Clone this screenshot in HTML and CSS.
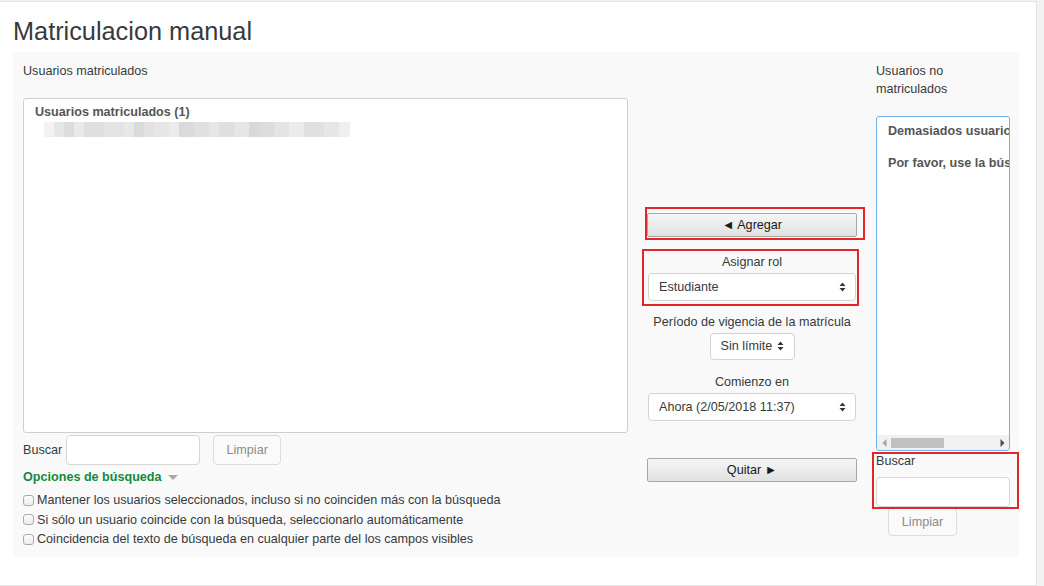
FILE: index.html
```html
<!DOCTYPE html>
<html lang="es">
<head>
<meta charset="utf-8">
<title>Matriculacion manual</title>
<link rel="stylesheet" href="styles.css">
</head>
<body>
<div class="card">
  <h2 class="title">Matriculacion manual</h2>
  <div class="panel">
    <div class="col-left">
      <div class="col-label">Usuarios matriculados</div>
      <div class="listbox">
        <div class="group-label">Usuarios matriculados (1)</div>
        <div class="blurred"></div>
      </div>
      <div class="search-row">
        <span class="search-label">Buscar</span>
        <span class="input input-left"></span>
        <span class="btn-clear btn-clear-left">Limpiar</span>
      </div>
      <div class="options-toggle">Opciones de búsqueda <span class="caret"></span></div>
      <div class="check-row"><span class="checkbox"></span>Mantener los usuarios seleccionados, incluso si no coinciden más con la búsqueda</div>
      <div class="check-row"><span class="checkbox"></span>Si sólo un usuario coincide con la búsqueda, seleccionarlo automáticamente</div>
      <div class="check-row"><span class="checkbox"></span>Coincidencia del texto de búsqueda en cualquier parte del los campos visibles</div>
    </div>

    <div class="col-mid">
      <div class="mark mark-add">
        <div class="btn-move">◄ Agregar</div>
      </div>
      <div class="mark mark-role">
        <div class="field-label first">Asignar rol</div>
        <div class="select select-wide">
          <span>Estudiante</span>
          <svg class="arrows" width="7" height="10" viewBox="0 0 7 10"><path d="M3.5 0.5 L6.5 4 L0.5 4 Z M0.5 6 L6.5 6 L3.5 9.5 Z" fill="#333"/></svg>
        </div>
      </div>
      <div class="field-label">Período de vigencia de la matrícula</div>
      <div class="select select-small">
        <span>Sin límite</span>
        <svg class="arrows" width="7" height="10" viewBox="0 0 7 10"><path d="M3.5 0.5 L6.5 4 L0.5 4 Z M0.5 6 L6.5 6 L3.5 9.5 Z" fill="#333"/></svg>
      </div>
      <div class="field-label">Comienzo en</div>
      <div class="select select-wide">
        <span>Ahora (2/05/2018 11:37)</span>
        <svg class="arrows" width="7" height="10" viewBox="0 0 7 10"><path d="M3.5 0.5 L6.5 4 L0.5 4 Z M0.5 6 L6.5 6 L3.5 9.5 Z" fill="#333"/></svg>
      </div>
      <div class="btn-move btn-remove">Quitar ►</div>
    </div>

    <div class="col-right">
      <div class="col-label">Usuarios no<br>matriculados</div>
      <div class="listbox listbox-right">
        <div class="list-inner">
          <div class="group-label">Demasiados usuarios (más de 100)</div>
          <div class="group-label second">Por favor, use la búsqueda.</div>
        </div>
        <div class="hscroll">
          <svg class="sarrow" width="5" height="8" viewBox="0 0 5 8"><path d="M4.5 0 L0.5 4 L4.5 8 Z" fill="#a3a3a3"/></svg>
          <span class="thumb"></span>
          <svg class="sarrow right" width="5" height="8" viewBox="0 0 5 8"><path d="M0.5 0 L4.5 4 L0.5 8 Z" fill="#505050"/></svg>
        </div>
      </div>
      <div class="mark mark-search">
        <div class="search-label-right">Buscar</div>
        <div class="input input-right"></div>
      </div>
      <span class="btn-clear btn-clear-right">Limpiar</span>
    </div>
  </div>
</div>
</body>
</html>
```
FILE: styles.css
```css
* { box-sizing: border-box; }
html, body {
  margin: 0;
  padding: 0;
}
body {
  background: #f2f2f2;
  font-family: "Liberation Sans", Arial, sans-serif;
  font-size: 12.6px;
  color: #373a3c;
  padding-top: 1px;
}
.card {
  width: 1037px;
  height: 585px;
  background: #fff;
  border: 1px solid #e3e3e3;
  border-left: none;
  padding-left: 13px;
}
.title {
  margin: 14px 0 6px 0;
  font-size: 25.3px;
  font-weight: normal;
  line-height: 30px;
  color: #373a3c;
}
.panel {
  width: 1006px;
  height: 505px;
  background: #f9f9f9;
  padding: 10px 0 0 10px;
  display: flex;
  align-items: flex-start;
}
.col-label {
  line-height: 18px;
  margin-bottom: 18px;
}
.col-left { width: 605px; }
.listbox {
  height: 335px;
  background: #fff;
  border: 1px solid #cfcfcf;
  border-radius: 3px;
}
.group-label {
  font-weight: bold;
  color: #555;
  line-height: 18px;
  padding: 4px 0 0 11px;
  white-space: nowrap;
}
.blurred {
  margin: 1px 0 0 20px;
  width: 306px;
  height: 15px;
  background: linear-gradient(to right,
    #f2f2f2 0 10px, #e6e6e6 10px 20px, #dcdcdc 20px 30px, #e9e9ea 30px 40px,
    #dedede 40px 60px, #e3e3e3 60px 80px, #e8e8e8 80px 90px, #d8dbde 90px 100px,
    #e2e2e2 100px 110px, #e6e6e6 110px 125px, #ebebeb 125px 135px, #dadada 135px 150px,
    #e0e0e0 150px 165px, #e6e6e6 165px 175px, #dde0e3 175px 190px, #e6e6e6 190px 205px,
    #d8d8d8 205px 215px, #dcdcdc 215px 230px, #e3e3e3 230px 245px, #ebebeb 245px 260px,
    #e0e0e0 260px 280px, #e6e6e6 280px 295px, #eeeff0 295px 306px);
}
.search-row {
  display: flex;
  align-items: center;
  margin-top: 2px;
  height: 30px;
}
.search-label { line-height: 18px; margin-right: 4px; padding-top: 0; }
.input {
  display: block;
  height: 30px;
  background: #fff;
  border: 1px solid #d6d6d6;
  border-radius: 4px;
}
.input-left { width: 134px; }
.btn-clear {
  display: flex;
  align-items: center;
  justify-content: center;
  width: 68px;
  height: 30px;
  border: 1px solid #dcdcdc;
  border-radius: 4px;
  color: #8a8a8a;
  background: #fafafa;
}
.btn-clear-left { margin-left: 13px; }
.options-toggle {
  margin-top: 3px;
  line-height: 18px;
  font-weight: bold;
  color: #138a3c;
  display: flex;
  align-items: center;
}
.caret {
  display: inline-block;
  margin-left: 6px;
  margin-top: 1px;
  width: 0;
  height: 0;
  border-left: 5px solid transparent;
  border-right: 5px solid transparent;
  border-top: 5px solid #a8a8a8;
}
.options-toggle + .check-row { margin-top: 5px; }
.check-row {
  line-height: 19.5px;
  display: flex;
  align-items: center;
  white-space: nowrap;
}
.checkbox {
  display: inline-block;
  width: 11px;
  height: 11px;
  border: 1px solid #ababab;
  border-radius: 3px;
  background: linear-gradient(#fbfbfb, #ececec);
  margin-right: 3px;
  margin-top: -1px;
}

/* middle */
.col-mid {
  width: 210px;
  margin-left: 19px;
  padding-top: 151px;
  display: flex;
  flex-direction: column;
  align-items: center;
}
.mark { position: relative; width: 100%; display: flex; flex-direction: column; align-items: center; }
.mark::after {
  content: "";
  position: absolute;
  border: 2px solid #e3262a;
  pointer-events: none;
}
.mark-add::after { left: -2px; right: -8px; top: -6px; bottom: -3px; }
.mark-role { margin-top: 13px; }
.mark-role::after { left: -5px; right: -2px; top: -1px; bottom: -5px; }
.mark-search::after { left: -4px; right: -9px; top: 0; bottom: -2px; }
.btn-move {
  width: 210px;
  height: 24px;
  border: 1px solid #a7a7a7;
  border-radius: 2px;
  background: linear-gradient(#f6f6f6, #e1e1e1);
  color: #1a1a1a;
  display: flex;
  align-items: center;
  justify-content: center;
  font-family: "Liberation Sans", "DejaVu Sans", sans-serif;
}
.btn-remove { margin-top: 37px; }
.field-label {
  line-height: 18px;
  text-align: center;
  white-space: nowrap;
  margin-top: 12px;
  margin-bottom: 2px;
}
.field-label.first { margin-top: 2.5px; }
.select {
  height: 28px;
  background: #fff;
  border: 1px solid #d3d3d3;
  border-radius: 4px;
  display: flex;
  align-items: center;
  justify-content: space-between;
  padding: 0 9px 0 10px;
}
.select-wide { width: 208px; }
.select-small { width: 85px; height: 27px; padding-right: 10px; }
.select-small + .field-label { margin-top: 13px; }
.arrows { display: block; }

/* right */
.col-right {
  width: 134px;
  margin-left: 19px;
}
.listbox-right {
  border: 1px solid #6fb1ea;
  display: flex;
  flex-direction: column;
  overflow: hidden;
}
.list-inner {
  flex: 1;
  overflow: hidden;
  padding-top: 0;
}
.group-label.second { padding-top: 14px; }
.hscroll {
  height: 15px;
  background: #f1f1f1;
  display: flex;
  align-items: center;
  padding: 0 4px 0 5px;
}
.thumb {
  display: block;
  width: 53px;
  height: 10px;
  background: #c1c1c1;
  margin-left: 4px;
}
.sarrow.right { margin-left: auto; }
.list-inner .group-label:first-child { padding-top: 5px; }
.mark-search { align-items: stretch; margin-top: 1px; }
.search-label-right { line-height: 18px; color: #373a3c; }
.input-right { width: 134px; margin-top: 7px; }
.btn-clear-right { margin-left: 12px; width: 69px; height: 29px; }
```
